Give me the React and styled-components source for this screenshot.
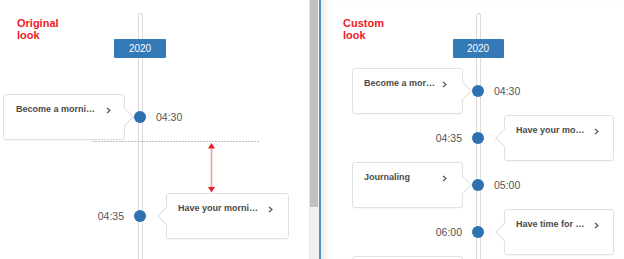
import styled, { createGlobalStyle } from "styled-components";

const GlobalStyle = createGlobalStyle`
  html, body {
    margin: 0;
    padding: 0;
    background: #fff;
    overflow: hidden;
  }
  body {
    font-family: "Liberation Sans", Arial, sans-serif;
  }
`;

const original = [
  { side: "left", time: "04:30", title: "Become a morning person", width: 122, pad: 12 },
  { side: "right", time: "04:35", title: "Have your morning coffee", width: 123, pad: 11 },
];

const custom = [
  { side: "left", time: "04:30", title: "Become a morning person", width: 111, pad: 11 },
  { side: "right", time: "04:35", title: "Have your morning coffee", width: 110, pad: 11 },
  { side: "left", time: "05:00", title: "Journaling", width: 111, pad: 11 },
  { side: "right", time: "06:00", title: "Have time for breakfast", width: 110, pad: 11 },
  { side: "left", time: "06:30", title: "Go for a run", width: 111, pad: 11 },
];

function Chevron() {
  return (
    <ChevronIcon width="5" height="7" viewBox="0 0 5 7">
      <polyline points="1,1 4,3.5 1,6" fill="none" stroke="#555" strokeWidth="1.2" />
    </ChevronIcon>
  );
}

function Timeline({ axis, items, label, first, gap, titleWidth, chevronGap, badgeWidth }) {
  return (
    <Stack>
      <Label $left={label.left}>{label.text[0]}<br />{label.text[1]}</Label>
      <Track $axis={axis}>
        <Badge $axis={axis} $width={badgeWidth}>2020</Badge>
        <Rows $first={first} $gap={gap}>
          {items.map((it) => (
            <Row key={it.time} $col={axis - 6}>
              {it.side === "left" ? (
                <>
                  <Card $side="left" $width={it.width} $pad={it.pad}>
                    <Title $width={titleWidth}>{it.title}</Title>
                    <ChevronWrap $gap={chevronGap}><Chevron /></ChevronWrap>
                  </Card>
                  <Dot />
                  <Time $side="right">{it.time}</Time>
                </>
              ) : (
                <>
                  <Time $side="left">{it.time}</Time>
                  <Dot />
                  <Card $side="right" $width={it.width} $pad={it.pad}>
                    <Title $width={titleWidth}>{it.title}</Title>
                    <ChevronWrap $gap={chevronGap}><Chevron /></ChevronWrap>
                  </Card>
                </>
              )}
            </Row>
          ))}
        </Rows>
      </Track>
    </Stack>
  );
}

export default function App() {
  return (
    <>
      <GlobalStyle />
      <Page>
        <LeftPanel>
          <Timeline
            axis={140}
            items={original}
            label={{ text: ["Original", "look"], left: 17 }}
            first={36}
            gap={53}
            titleWidth={82}
            chevronGap={8}
            badgeWidth={52}
          />
          <Annotation width="309" height="259" viewBox="0 0 309 259">
            <line x1="92" y1="141.5" x2="260" y2="141.5" stroke="#bdbdbd" strokeWidth="1" strokeDasharray="2 1" />
            <line x1="211.5" y1="147" x2="211.5" y2="188" stroke="#f59a9a" strokeWidth="1.6" />
            <polygon points="211.5,143 208,148.5 215,148.5" fill="#e8202a" />
            <polygon points="211.5,192.5 208,187 215,187" fill="#e8202a" />
          </Annotation>
        </LeftPanel>
        <Scrollbar>
          <Thumb />
        </Scrollbar>
        <RightPanel>
          <Timeline
            axis={157}
            items={custom}
            label={{ text: ["Custom", "look"], left: 22 }}
            first={10}
            gap={1}
            titleWidth={71.5}
            chevronGap={6}
            badgeWidth={51}
          />
        </RightPanel>
      </Page>
    </>
  );
}

const Page = styled.div`
  display: flex;
  width: 624px;
  height: 259px;
  overflow: hidden;
`;

const LeftPanel = styled.div`
  position: relative;
  width: 309px;
  flex: none;
  display: grid;
`;

const Scrollbar = styled.div`
  width: 10px;
  flex: none;
  background: #f1f1f1;
  border-left: 1px solid #e6e6e6;
  box-sizing: border-box;
  padding-right: 1px;
`;

const Thumb = styled.div`
  height: 207px;
  background: #c1c1c1;
`;

const RightPanel = styled.div`
  flex: 1;
  display: grid;
  border-left: 2px solid #5a8fc2;
  box-shadow: inset 9px 0 8px -6px rgba(0, 0, 0, 0.1);
`;

const Stack = styled.div`
  display: grid;
  grid-template-areas: "stack";
  align-items: start;
`;

const Label = styled.div`
  grid-area: stack;
  padding: 17px 0 0 ${(p) => p.$left}px;
  color: #ee1c25;
  font-size: 11px;
  font-weight: bold;
  line-height: 12px;
`;

const Track = styled.div`
  grid-area: stack;
  position: relative;
  margin-top: 13px;
  min-height: 246px;

  &::before {
    content: "";
    position: absolute;
    left: ${(p) => p.$axis - 2.5}px;
    top: 0;
    bottom: -40px;
    width: 5px;
    box-sizing: border-box;
    border: 1px solid #dadada;
    border-bottom: none;
    border-radius: 3px 3px 0 0;
    background: #fff;
  }
`;

const Badge = styled.div`
  position: relative;
  width: ${(p) => p.$width}px;
  height: 19px;
  margin: 26px 0 0 ${(p) => p.$axis - p.$width / 2}px;
  background: #337ab7;
  color: #fff;
  font-size: 10px;
  line-height: 19px;
  text-align: center;
  border-radius: 1px;
`;

const Rows = styled.div`
  display: flex;
  flex-direction: column;
  gap: ${(p) => p.$gap}px;
  margin-top: ${(p) => p.$first}px;
`;

const Row = styled.div`
  position: relative;
  display: grid;
  grid-template-columns: ${(p) => p.$col}px 12px 1fr;
  align-items: center;
  height: 46px;
`;

const Card = styled.div`
  position: relative;
  box-sizing: border-box;
  width: ${(p) => p.$width}px;
  height: 46px;
  justify-self: ${(p) => (p.$side === "left" ? "end" : "start")};
  margin: ${(p) => (p.$side === "left" ? "0 9px 0 0" : "0 0 0 20px")};
  padding: 8px 0 0 ${(p) => p.$pad}px;
  display: flex;
  align-items: flex-start;
  background: #fff;
  border: 1px solid #e1e1e1;
  border-radius: 3px;
  box-shadow: 0 1px 1px rgba(0, 0, 0, 0.03);

  &::after {
    content: "";
    position: absolute;
    top: 50%;
    width: 13px;
    height: 13px;
    margin-top: -7px;
    background: #fff;
    transform: rotate(45deg);
    ${(p) =>
      p.$side === "left"
        ? "right: -7px; border-top: 1px solid #e1e1e1; border-right: 1px solid #e1e1e1;"
        : "left: -7px; border-bottom: 1px solid #e1e1e1; border-left: 1px solid #e1e1e1;"}
  }
`;

const Title = styled.div`
  width: ${(p) => p.$width}px;
  flex: none;
  font-size: 9px;
  font-weight: bold;
  line-height: 12px;
  color: #4a4a4a;
  white-space: nowrap;
  overflow: hidden;
  text-overflow: ellipsis;
`;

const ChevronWrap = styled.span`
  display: flex;
  margin: 4px 0 0 ${(p) => p.$gap}px;
`;

const ChevronIcon = styled.svg`
  display: block;
`;

const Dot = styled.div`
  position: relative;
  width: 12px;
  height: 12px;
  border-radius: 50%;
  background: #2f70b1;
`;

const Time = styled.div`
  font-size: 10.5px;
  color: #555;
  justify-self: ${(p) => (p.$side === "left" ? "end" : "start")};
  padding: ${(p) => (p.$side === "left" ? "0 10px 0 0" : "0 0 0 10px")};
`;

const Annotation = styled.svg`
  position: absolute;
  left: 0;
  top: 0;
  pointer-events: none;
`;
